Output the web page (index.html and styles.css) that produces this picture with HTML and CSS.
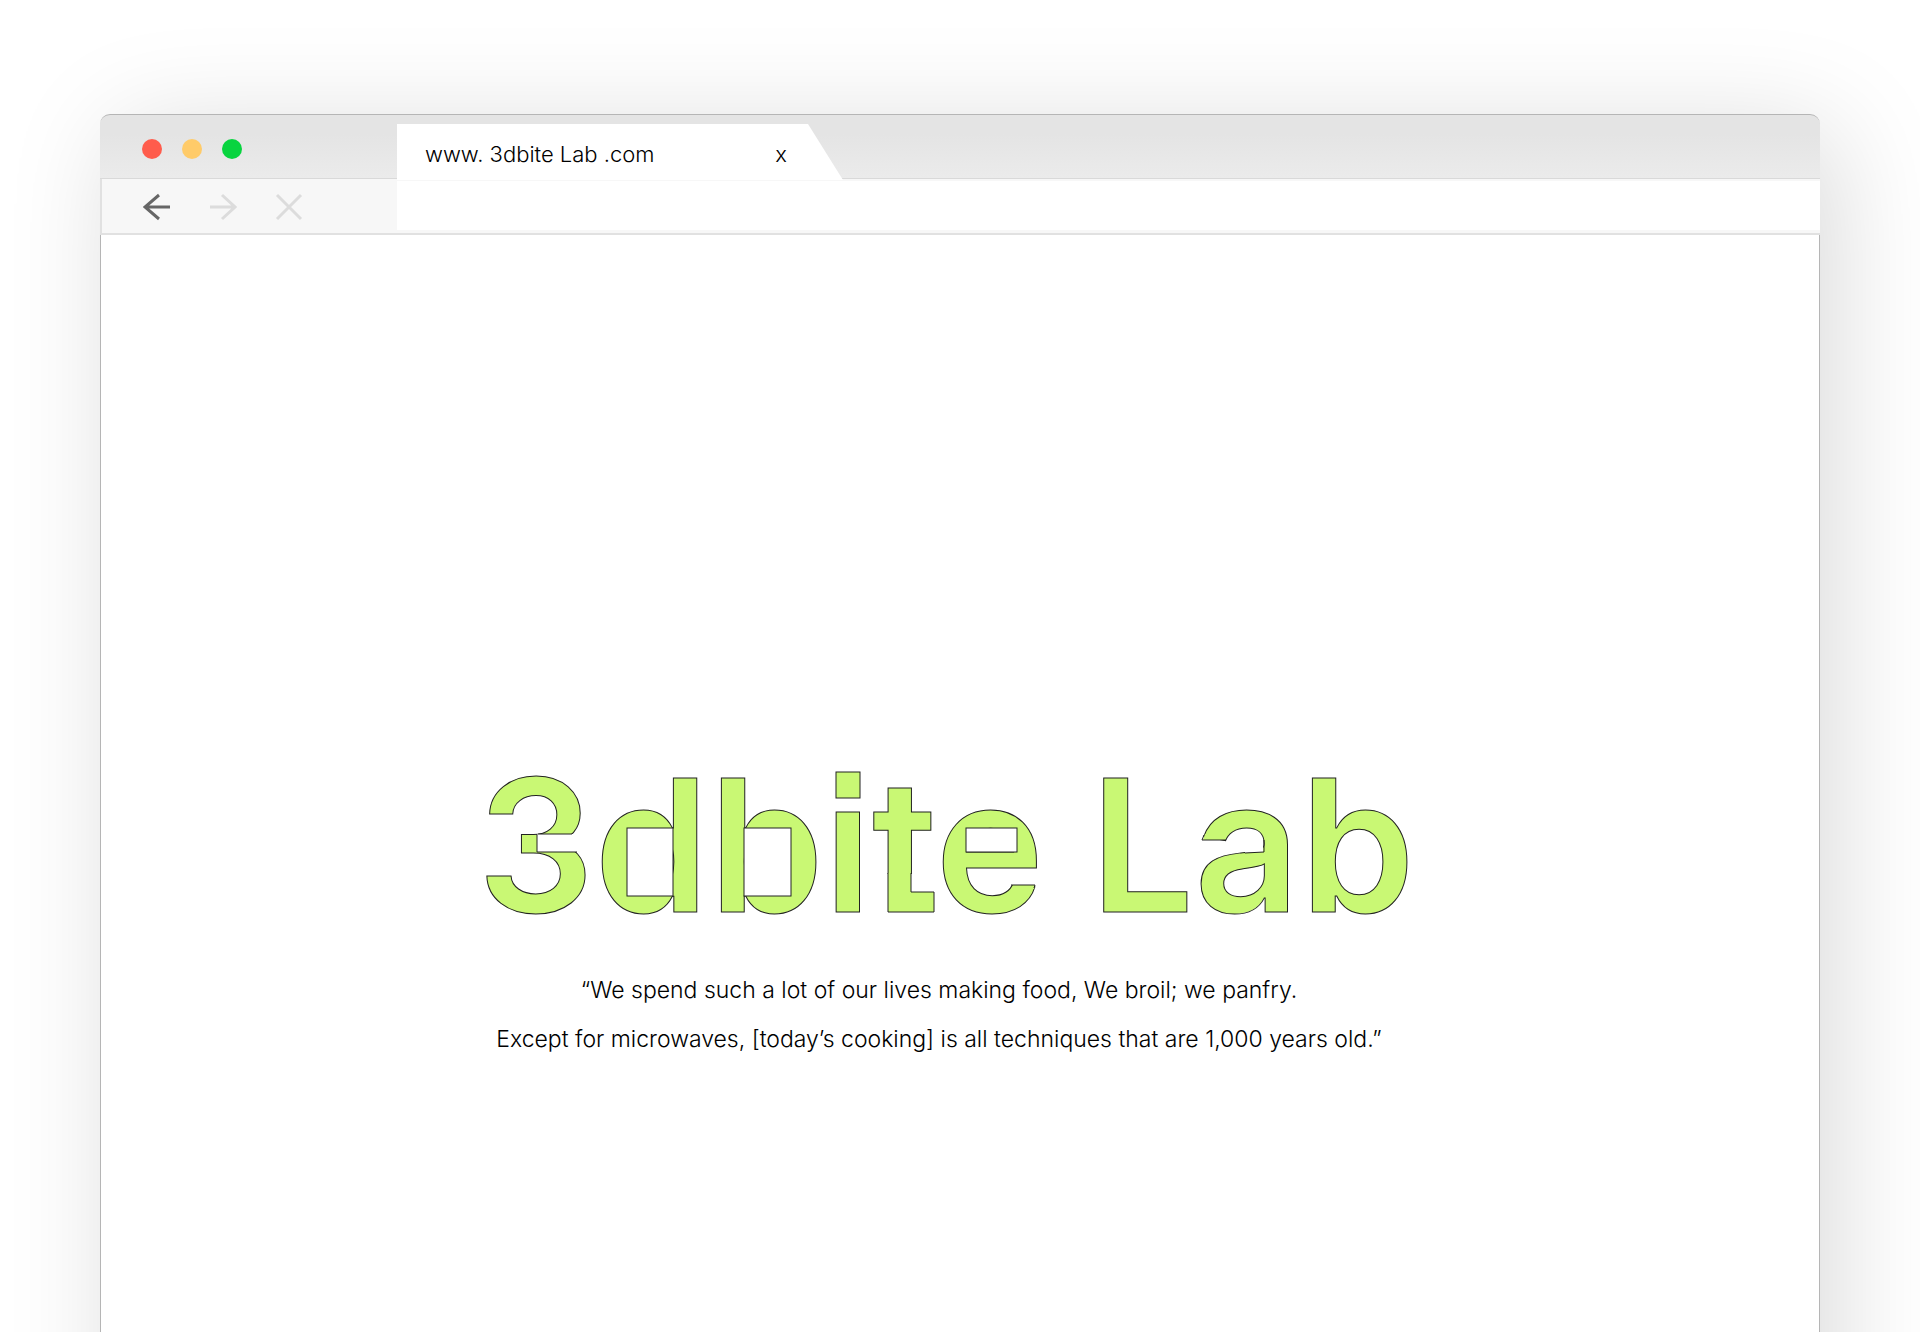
FILE: index.html
```html
<!DOCTYPE html>
<html lang="en">
	<head>
		<meta charset="UTF-8">
		<title>3dbite Lab</title>
		<link rel="stylesheet" href="styles.css">
	</head>
	<body>
		<div class="window">
			<div class="titlebar">
				<div class="lights">
					<button class="light red" aria-label="Close window"></button>
					<button class="light yellow" aria-label="Minimize window"></button>
					<button class="light green" aria-label="Zoom window"></button>
				</div>
				<div class="tab">
					<span>www. 3dbite Lab .com</span>
					<button class="tab-close" aria-label="Close tab">x</button>
				</div>
			</div>
			<div class="toolbar">
				<div class="nav">
					<button class="back" aria-label="Back">
						<svg width="28" height="28" viewBox="0 0 28 28"><path d="M27 14H2M16 2L2 14L16 26"/></svg>
					</button>
					<button aria-label="Forward">
						<svg width="28" height="28" viewBox="0 0 28 28"><path d="M1 14H26M13 2L26 14L13 26"/></svg>
					</button>
					<button aria-label="Stop">
						<svg width="28" height="28" viewBox="0 0 28 28"><path d="M2 2L26 26M26 2L2 26"/></svg>
					</button>
				</div>
				<input class="address" type="text" aria-label="Address">
			</div>
			<main class="page">
				<h1>
					<span class="word">3dbite Lab
						<!-- square cuts laid over the round letters -->
						<svg class="cuts" width="938" height="222" viewBox="0 0 938 222" aria-hidden="true">
							<!-- 3: split in the middle -->
							<rect class="gap" x="60" y="100" width="44" height="18"/>
							<path class="edge" d="M61 100H95M60 118H100M60 100V118"/>
							<!-- d, b: square counters -->
							<rect class="ink" x="147" y="98" width="5" height="60"/>
							<rect class="hole" x="150" y="94" width="46" height="68"/>
							<rect class="ink" x="313" y="98" width="3" height="60"/>
							<rect class="hole" x="267" y="94" width="47" height="68"/>
							<!-- i: square dot -->
							<rect class="gap" x="355" y="34" width="32" height="32"/>
							<rect class="block" x="359" y="38" width="24" height="26"/>
							<!-- t: square foot -->
							<rect class="gap" x="408" y="140" width="51" height="42"/>
							<rect class="ink" x="411" y="139" width="23" height="20"/>
							<path class="block" d="M411 139V178H457V158H434V139"/>
							<!-- e: square counter, level end -->
							<rect class="hole" x="489" y="94" width="51" height="24"/>
							<rect class="gap" x="531" y="145" width="31" height="6"/>
							<path class="ink" d="M540 151H558L557 155L540 153z"/>
							<path class="edge" d="M534 151H558L557 154"/>
							<!-- a: level end, straight arm -->
							<path class="ink" d="M728 100L748 104V106H726z"/>
							<path class="edge" d="M727 101L725 106H749"/>
							<path class="gap" d="M768 117L786 106V118L768 119z"/>
							<path class="edge" d="M787 106V118L768 119"/>
						</svg>
					</span>
				</h1>
				<p>“We spend such a lot of our lives making food, We broil; we panfry.<br>
				Except for microwaves, [today’s cooking] is all techniques that are 1,000 years old.”</p>
			</main>
		</div>
	</body>
</html>
```
FILE: styles.css
```css
* {
	box-sizing: border-box;
}
body {
	height: 100vh;
	margin: 0;
	padding: 114px 100px 0;
	overflow: hidden;
	background: #fff;
	color: #000;
	font-family: Inter, "Liberation Sans", sans-serif;
	font-size: 23px;
	font-weight: 300;
}
button {
	padding: 0;
	border: none;
	background: none;
	color: inherit;
	font: inherit;
	cursor: pointer;
}
.window {
	height: 120vh;
	border-radius: 10px 10px 0 0;
	background: #fff;
	box-shadow: 16px 16px 110px rgba(0, 0, 0, 0.15);
}
.titlebar {
	display: flex;
	height: 65px;
	border-top: 1px solid #b5b5b5;
	border-bottom: 1px solid #d9d9d9;
	border-radius: 10px 10px 0 0;
	background: linear-gradient(#e4e4e4 30%, #ebebeb);
}
.lights {
	display: flex;
	flex: none;
	gap: 20px;
	width: 297px;
	padding: 24px 0 0 42px;
}
.light {
	width: 20px;
	height: 20px;
	border-radius: 50%;
}
.red {
	background: #ff5c4c;
}
.yellow {
	background: #ffcb69;
}
.green {
	background: #08d43f;
}
.tab {
	display: flex;
	justify-content: space-between;
	width: 446px;
	height: 56px;
	margin-top: 9px;
	padding: 15px 56px 0 28px;
	background: #fff;
	font-size: 22px;
	line-height: 30px;
	clip-path: polygon(0 0, 411px 0, 100% 100%, 0 100%);
}
.tab-close {
	height: 30px;
}
.toolbar {
	display: flex;
	height: 56px;
	border: solid #e1e1e1;
	border-width: 0 0 2px 2px;
	background: #f7f7f7;
}
.nav {
	display: flex;
	flex: none;
	align-items: center;
	gap: 38px;
	width: 295px;
	padding: 2px 0 0 41px;
}
.nav button {
	height: 28px;
}
.nav svg {
	display: block;
	fill: none;
	stroke: #dcdcdc;
	stroke-width: 3;
}
.nav .back svg {
	stroke: #666;
}
.address {
	flex: 1;
	height: 49px;
	margin-top: 2px;
	padding: 0 28px;
	border: none;
	background: #fff;
	font: inherit;
}
.page {
	height: 100%;
	padding: 499px 42px 0 0;
	border: solid #b5b5b5;
	border-width: 0 1px;
	text-align: center;
}
h1 {
	margin: 0;
	padding-left: 14px;
	color: #c9f874;
	font-size: 184px;
	font-weight: 600;
	line-height: 222px;
	-webkit-text-stroke: 1px #222;
}
.word {
	display: inline-block;
	position: relative;
}
.cuts {
	position: absolute;
	top: 0;
	left: 0;
}
.ink {
	fill: #c9f874;
}
.gap {
	fill: #fff;
}
.edge {
	fill: none;
	stroke: #222;
}
.hole {
	fill: #fff;
	stroke: #222;
}
.block {
	fill: #c9f874;
	stroke: #222;
}
p {
	margin: 10px 0 0;
	line-height: 49px;
}
```
